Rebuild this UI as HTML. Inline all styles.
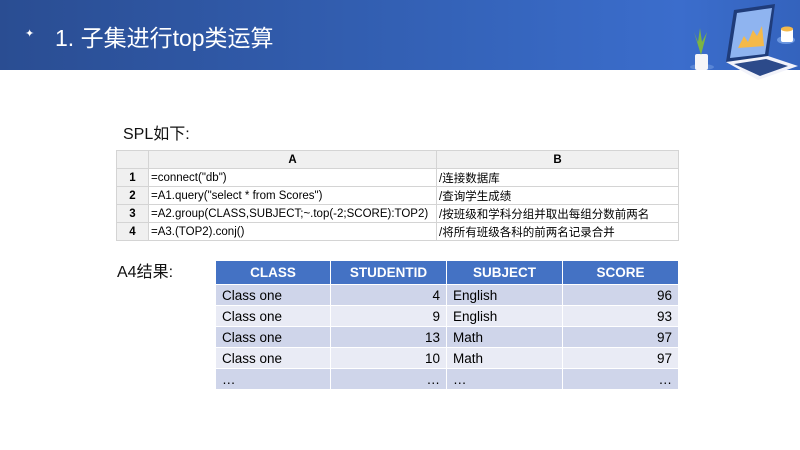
<!DOCTYPE html>
<html><head><meta charset="utf-8"><style>
body{margin:0;width:800px;height:450px;background:#fff;position:relative;overflow:hidden;font-family:"Liberation Sans","Noto Sans CJK SC",sans-serif;}
.hd{position:absolute;left:0;top:0;width:800px;height:70px;background:linear-gradient(90deg,#2a4d92 0%,#3564bb 60%,#3b6dcc 85%,#3463bd 100%);}
.t{position:absolute;left:55px;top:19px;color:#fff;font-size:23px;}
.star{position:absolute;left:25px;top:27px;color:#fff;font-size:11px;}
.lab{position:absolute;font-size:16px;color:#111;}
table{position:absolute;border-collapse:collapse;table-layout:fixed;}
.spl{left:116px;top:150px;font-size:11.5px;width:562px;}
.spl td{border:1px solid #d4d4d4;height:17px;padding:0 2px;white-space:nowrap;overflow:hidden;}
.spl tr:first-child td{background:#f0f0f0;text-align:center;font-weight:bold;}
.spl td.n{background:#f0f0f0;text-align:center;font-weight:bold;}
.res{left:215px;top:260px;font-size:13.5px;width:463px;}
.res td{border:1px solid #fff;height:20px;padding:0 6px;}
.res th{background:#4472c4;color:#fff;height:21px;border:1px solid #fff;font-size:13.5px;}
.res tr:nth-child(even) td{background:#cfd5ea;}
.res tr:nth-child(odd) td{background:#e9ebf5;}
.r{text-align:right;}
</style></head><body>
<div class="hd"></div>
<div class="star">✦</div>
<div class="t">1. 子集进行top类运算</div>
<svg style="position:absolute;left:680px;top:0px" width="120" height="80" viewBox="0 0 120 80">
<ellipse cx="22" cy="67" rx="12" ry="3" fill="#5a86d6"/>
<rect x="15" y="54" width="13" height="16" rx="2" fill="#f4f4f8"/>
<path d="M21 55 L14 32 L18 42 L20 28 L22 42 L27 32 Z" fill="#7cb342"/>
<path d="M46 62 L54 10 L95 4 L88 58 Z" fill="#1f3c7a"/>
<path d="M50 58 L57 13 L92 8 L85 54 Z" fill="#8fb4f0"/>
<path d="M58 48 L64 36 L68 42 L73 30 L77 36 L82 26 L84 46 Z" fill="#f5b94a"/>
<path d="M46 62 L88 56 L118 66 L78 80 Z" fill="#f2f3fa"/>
<path d="M54 64 L86 59 L108 66 L80 76 Z" fill="#2c4a8a"/>
<ellipse cx="106" cy="40" rx="9" ry="4" fill="#6a96e0"/>
<rect x="101" y="28" width="12" height="14" rx="2" fill="#fff"/>
<ellipse cx="107" cy="29" rx="6" ry="2.5" fill="#f5b94a"/>
</svg>
<div class="lab" style="left:123px;top:120px">SPL如下:</div>
<table class="spl">
<colgroup><col style="width:32px"><col style="width:288px"><col style="width:242px"></colgroup>
<tr><td class="n" style="font-weight:normal"></td><td>A</td><td>B</td></tr>
<tr><td class="n">1</td><td>=connect("db")</td><td>/连接数据库</td></tr>
<tr><td class="n">2</td><td>=A1.query("select * from Scores")</td><td>/查询学生成绩</td></tr>
<tr><td class="n">3</td><td>=A2.group(CLASS,SUBJECT;~.top(-2;SCORE):TOP2)</td><td>/按班级和学科分组并取出每组分数前两名</td></tr>
<tr><td class="n">4</td><td>=A3.(TOP2).conj()</td><td>/将所有班级各科的前两名记录合并</td></tr>
</table>
<div class="lab" style="left:117px;top:258px">A4结果:</div>
<table class="res">
<colgroup><col style="width:115px"><col style="width:116px"><col style="width:116px"><col style="width:116px"></colgroup>
<tr><th>CLASS</th><th>STUDENTID</th><th>SUBJECT</th><th>SCORE</th></tr>
<tr><td>Class one</td><td class="r">4</td><td>English</td><td class="r">96</td></tr>
<tr><td>Class one</td><td class="r">9</td><td>English</td><td class="r">93</td></tr>
<tr><td>Class one</td><td class="r">13</td><td>Math</td><td class="r">97</td></tr>
<tr><td>Class one</td><td class="r">10</td><td>Math</td><td class="r">97</td></tr>
<tr><td>…</td><td class="r">…</td><td>…</td><td class="r">…</td></tr>
</table>
</body></html>
